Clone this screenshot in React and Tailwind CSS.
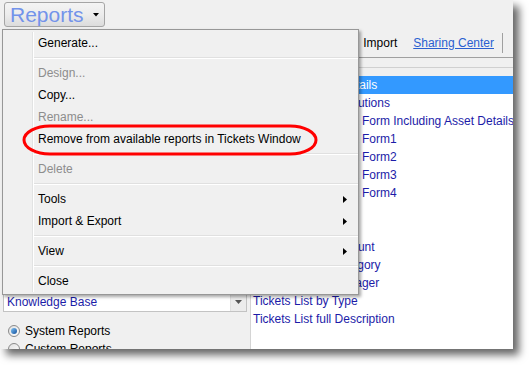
import React from "react";

const font = { fontFamily: '"Liberation Sans", Arial, sans-serif' };

const menuItems = [
  { label: "Generate..." },
  { sep: true },
  { label: "Design...", disabled: true },
  { label: "Copy..." },
  { label: "Rename...", disabled: true },
  { label: "Remove from available reports in Tickets Window" },
  { sep: true },
  { label: "Delete", disabled: true },
  { sep: true },
  { label: "Tools", sub: true },
  { label: "Import & Export", sub: true },
  { sep: true },
  { label: "View", sub: true },
  { sep: true },
  { label: "Close" },
];

const reports = [
  "Tickets List with Details",
  "Tickets List with Solutions",
  "Tickets Details Print Form Including Asset Details",
  "Tickets Details Print Form1",
  "Tickets Details Print Form2",
  "Tickets Details Print Form3",
  "Tickets Details Print Form4",
  "Tickets Summary",
  "Tickets by Status",
  "Tickets List by Account",
  "Tickets List by Category",
  "Tickets List by Manager",
  "Tickets List by Type",
  "Tickets List full Description",
];

const Radio = ({ checked }) => (
  <span className="w-[12px] h-[12px] rounded-full border border-[#8a8a8a] bg-gradient-to-br from-[#e0e0e0] to-[#ffffff] flex items-center justify-center">
    {checked && (
      <span className="w-[6px] h-[6px] rounded-full bg-gradient-to-br from-[#7fc3f5] to-[#10509c]" />
    )}
  </span>
);

const ReportsMenu = () => (
  <div className="absolute left-[2px] top-[29px] w-[357px] bg-[#f0f0f0] border border-[#979797] shadow-[2px_2px_3px_rgba(0,0,0,0.35)] py-[2px] flex">
    {/* icon gutter */}
    <div className="w-[30px] border-r border-[#e2e3e3]" />
    <div className="flex-1 flex flex-col border-l border-white">
      {menuItems.map((item, i) =>
        item.sep ? (
          <div key={i} className="h-[8px] flex flex-col justify-center">
            <div className="border-t border-[#e0e0e0]" />
            <div className="border-t border-white" />
          </div>
        ) : (
          <div
            key={i}
            className={`h-[22px] flex items-center pl-[4px] pr-[11px] text-[12px] ${
              item.disabled ? "text-[#8d8d8d]" : "text-black"
            }`}
          >
            <span className="flex-1">{item.label}</span>
            {item.sub && (
              <svg width="4" height="7" viewBox="0 0 4 7">
                <path d="M0 0 L4 3.5 L0 7 Z" fill="#000" />
              </svg>
            )}
          </div>
        )
      )}
    </div>
  </div>
);

export default function App() {
  return (
    <div className="relative w-[529px] h-[365px] bg-white overflow-hidden" style={font}>
      <div className="relative w-[513px] h-[349px] bg-[#f0f0f0] overflow-hidden shadow-[6px_6px_8px_rgba(0,0,0,0.6)] flex flex-col">
        {/* top bar */}
        <div className="h-[29px] shrink-0 pl-[4px] pt-[2px]">
          <div className="w-[101px] h-[25px] rounded-[3px] border border-[#a5a5a5] bg-gradient-to-b from-[#f4f4f4] via-[#ececec] to-[#dcdcdc] flex items-center pl-[5px]">
            <span className="text-[21px] leading-none text-[#7393ea]">Reports</span>
            <svg className="ml-[9px]" width="6" height="4" viewBox="0 0 6 4">
              <path d="M0 0 H6 L3 3.5 Z" fill="#000" />
            </svg>
          </div>
        </div>

        <div className="flex flex-1 min-h-0">
          {/* left panel */}
          <div className="w-[250px] shrink-0 flex flex-col">
            <div className="h-[263px] shrink-0 px-[4px] pt-[6px] text-[12px] text-[#1c1ca8]">
              <div>Tickets</div>
            </div>
            <div className="mx-[3px] h-[20px] shrink-0 bg-white border border-[#c3c3c3] flex items-center text-[12px] text-[#1c1ca8]">
              <span className="flex-1 pl-[3px]">Knowledge Base</span>
              <div className="w-[16px] h-full bg-[#ececec] border-l border-[#e0e0e0] flex items-center justify-center">
                <svg width="7" height="4" viewBox="0 0 7 4">
                  <path d="M0 0 H7 L3.5 4 Z" fill="#555" />
                </svg>
              </div>
            </div>
            <div className="mt-[10px] shrink-0 flex flex-col pl-[8px] text-[12px] text-black">
              <div className="h-[18px] flex items-center gap-[5px]">
                <Radio checked />
                <span>System Reports</span>
              </div>
              <div className="h-[18px] flex items-center gap-[5px]">
                <Radio />
                <span>Custom Reports</span>
              </div>
            </div>
          </div>

          {/* right panel */}
          <div className="flex-1 flex flex-col">
            <div className="h-[29px] shrink-0 border-b border-[#a0a0a0] flex items-center justify-end pr-[12px] text-[12px]">
              <span className="text-black mr-[16px]">Export</span>
              <span className="text-black mr-[16px]">Import</span>
              <span className="text-[#2a5fd0] underline mr-[8px]">Sharing Center</span>
              <div className="w-px h-[20px] bg-[#a0a0a0]" />
            </div>
            <div className="h-[18px] shrink-0 flex items-center text-[12px] text-black pl-[36px] pr-[1px]">
              <span>Reports List</span>
              <div className="flex-1 ml-[2px] border-t border-[#d0d0d0]" />
            </div>
            <div className="flex-1 bg-white border-l border-[#d4d4d4] border-r border-r-[#d0d0d0] overflow-hidden">
              {reports.map((r, i) => (
                <div
                  key={r}
                  className={`h-[18px] flex items-center pl-[2px] whitespace-nowrap text-[12px] ${
                    i === 0 ? "bg-[#3399ff] text-white" : "text-[#1c1ca8]"
                  }`}
                >
                  {r}
                </div>
              ))}
            </div>
          </div>
        </div>

        <ReportsMenu />

        {/* red annotation ellipse */}
        <svg className="absolute left-0 top-0 pointer-events-none" width="513" height="349">
          <rect x="24" y="126" width="292" height="28" rx="26" ry="14" fill="none" stroke="#ff0000" strokeWidth="3" />
        </svg>
      </div>
    </div>
  );
}
